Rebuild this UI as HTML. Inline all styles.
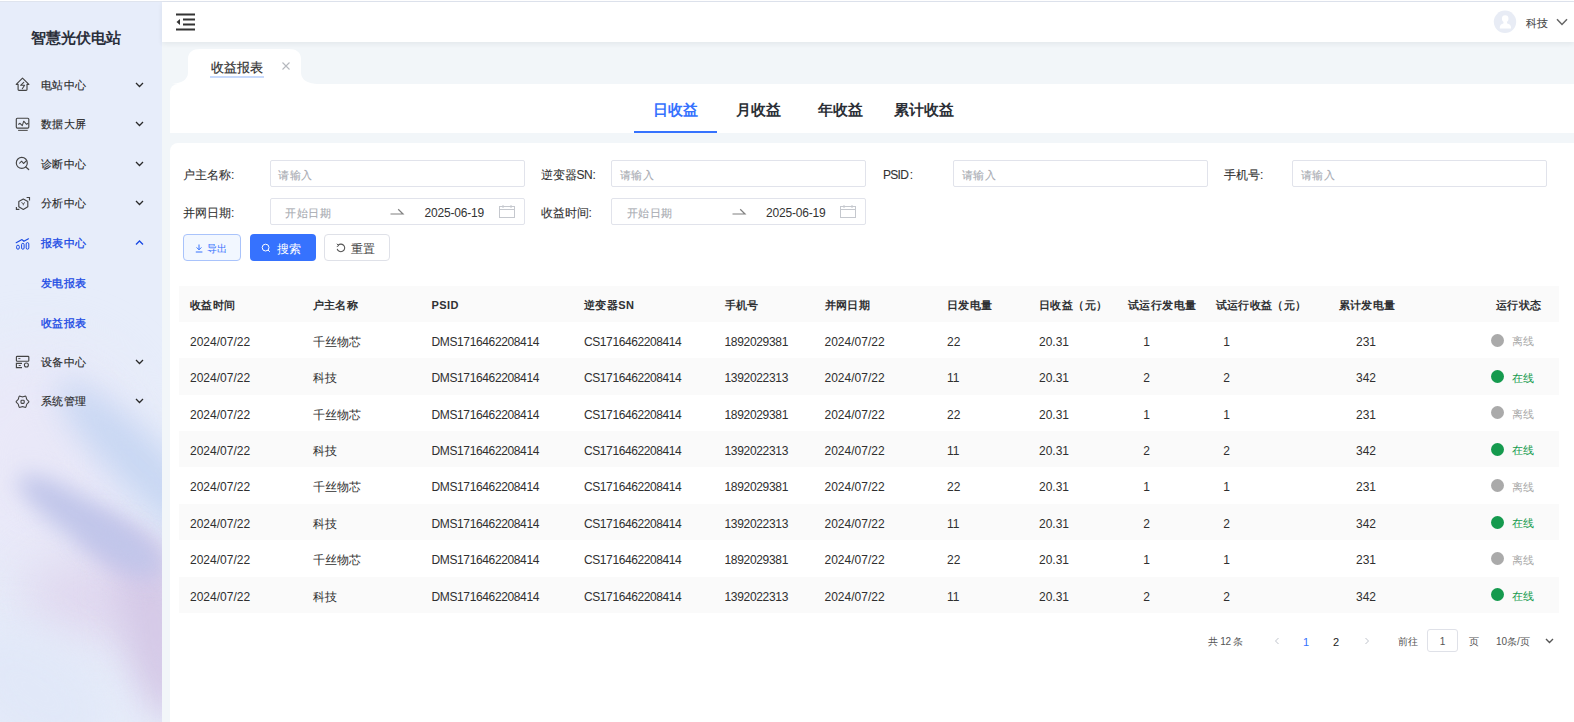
<!DOCTYPE html><html><head><meta charset="utf-8"><style>
*{box-sizing:border-box;margin:0;padding:0}
html,body{width:1574px;height:722px;overflow:hidden}
body{font-family:"Liberation Sans",sans-serif;color:#333;background:#f2f6f9;position:relative}
.a{position:absolute;white-space:nowrap}
#side{left:0;top:2px;width:162px;height:720px;background:#e7edfa;overflow:hidden}
.blob{position:absolute;border-radius:50%}
.mt{font-size:11px;letter-spacing:0.25px;line-height:14px;color:#333;-webkit-text-stroke-width:0.15px}
.act{color:#1848e4}
#header{left:162px;top:2px;width:1412px;height:40px;background:#fff;box-shadow:0 2px 5px rgba(30,40,60,0.07)}
#topline{left:0;top:1px;width:1574px;height:1px;background:#dfe4ee}
#top0{left:0;top:0;width:1574px;height:1px;background:#fff}
.card{background:#fff}
.lbl{font-size:12px;line-height:14px;color:#333;-webkit-text-stroke-width:0.1px}
.inp{border:1px solid #e1e3eb;border-radius:2px;background:#fff;height:27px}
.ph{font-size:11px;line-height:14px;color:#a8abb2;letter-spacing:0.5px;-webkit-text-stroke-width:0.1px}
.th{font-size:11px;letter-spacing:0.4px;line-height:14px;font-weight:bold;color:#303133}
.td{font-size:12px;line-height:14px;color:#2f2f2f}
.stripe{background:#fafafa}
</style></head><body>
<div id="side" class="a">
<div class="blob" style="left:-60.0px;top:350.0px;width:200px;height:220px;background:#e9e8f8;transform:rotate(0deg);filter:blur(30px)"></div>
<div class="blob" style="left:20.0px;top:550.0px;width:150px;height:90px;background:#e0d8ef;transform:rotate(0deg);filter:blur(25px)"></div>
<div class="blob" style="left:120.0px;top:530.0px;width:70px;height:190px;background:#d5c9e7;transform:rotate(-10deg);filter:blur(18px)"></div>
<div class="blob" style="left:112.5px;top:347.0px;width:55px;height:230px;background:#c8d7f3;transform:rotate(-45deg);filter:blur(16px)"></div>
<div class="blob" style="left:75.0px;top:525.0px;width:90px;height:40px;background:#cbc5ea;transform:rotate(35deg);filter:blur(12px)"></div>
<div class="blob" style="left:5.0px;top:501.0px;width:170px;height:42px;background:#c1c6ea;transform:rotate(33deg);filter:blur(11px)"></div>
<div class="blob" style="left:-50.0px;top:635.0px;width:170px;height:110px;background:#e1e8f8;transform:rotate(35deg);filter:blur(22px)"></div>
</div>
<div id="topline" class="a"></div><div id="top0" class="a"></div>
<div class="a" style="left:0;top:29px;width:151px;text-align:center;font-size:15px;line-height:18px;font-weight:bold;color:#2b2f3a">智慧光伏电站</div>
<div class="a mt" style="left:41px;top:78px;color:#2a2a2a;">电站中心</div>
<svg class="a" style="left:10px;top:72px" width="30" height="30" viewBox="0 0 30 30"><path d="M6.2 12.3 L12.5 6.2 L18.9 12.3 H17 V17.4 Q17 18.3 16.1 18.3 H9 Q8.1 18.3 8.1 17.4 V12.3 Z" fill="none" stroke="#444" stroke-width="1.15" stroke-linejoin="round"/><path d="M13.75 10.4 L10.6 13.3 H14.6 L12.3 16.7" fill="none" stroke="#444" stroke-width="1.1" stroke-linejoin="round" stroke-linecap="round"/></svg>
<svg class="a" style="left:135px;top:82px" width="9" height="6" viewBox="0 0 9 6"><path d="M1 1 L4.5 4.5 L8 1" fill="none" stroke="#2a2a2a" stroke-width="1.3"/></svg>
<div class="a mt" style="left:41px;top:117px;color:#2a2a2a;">数据大屏</div>
<svg class="a" style="left:10px;top:110px" width="30" height="30" viewBox="0 0 30 30"><rect x="6.3" y="8.2" width="12.5" height="9.9" rx="1" fill="none" stroke="#444" stroke-width="1.15"/><path d="M8.3 14.5 L10 13.3 L12.3 15.6 L13.7 11.2 L16.6 14.3 L18.3 13.3" fill="none" stroke="#444" stroke-width="1.05" stroke-linejoin="round"/><path d="M8.1 20.4 H17.7" stroke="#555" stroke-width="1.1"/></svg>
<svg class="a" style="left:135px;top:121px" width="9" height="6" viewBox="0 0 9 6"><path d="M1 1 L4.5 4.5 L8 1" fill="none" stroke="#2a2a2a" stroke-width="1.3"/></svg>
<div class="a mt" style="left:41px;top:156.5px;color:#2a2a2a;">诊断中心</div>
<svg class="a" style="left:10px;top:150px" width="30" height="30" viewBox="0 0 30 30"><circle cx="11.8" cy="12.9" r="5.5" fill="none" stroke="#444" stroke-width="1.15"/><path d="M15.8 17 L18.7 19.5" stroke="#444" stroke-width="1.2" stroke-linecap="round"/><path d="M9.3 13.5 L11.6 11.2 L13.5 13.5 L16.6 10.6" fill="none" stroke="#444" stroke-width="1.05" stroke-linejoin="round"/></svg>
<svg class="a" style="left:135px;top:160.5px" width="9" height="6" viewBox="0 0 9 6"><path d="M1 1 L4.5 4.5 L8 1" fill="none" stroke="#2a2a2a" stroke-width="1.3"/></svg>
<div class="a mt" style="left:41px;top:196px;color:#2a2a2a;">分析中心</div>
<svg class="a" style="left:10px;top:189px" width="30" height="30" viewBox="0 0 30 30"><path d="M13.3 10 L17.8 12.6 V17.8 L13.3 20.4 L8.8 17.8 V12.6 Z" fill="none" stroke="#444" stroke-width="1.15" stroke-linejoin="round"/><path d="M16.6 8.5 H19.5 V11.6 M6.4 18.1 V20.4 H9.4" fill="none" stroke="#444" stroke-width="1.15"/><path d="M11.4 13.5 L13.3 14.7 L15 13.5 M13.3 14.7 V16.3" fill="none" stroke="#555" stroke-width="1"/></svg>
<svg class="a" style="left:135px;top:200px" width="9" height="6" viewBox="0 0 9 6"><path d="M1 1 L4.5 4.5 L8 1" fill="none" stroke="#2a2a2a" stroke-width="1.3"/></svg>
<div class="a mt" style="left:41px;top:236px;color:#1848e4;-webkit-text-stroke-width:0.3px">报表中心</div>
<svg class="a" style="left:10px;top:229px" width="30" height="30" viewBox="0 0 30 30"><path d="M6.2 13.7 L12 10.6 L13.9 12.3 L18.5 9.8" fill="none" stroke="#1848e4" stroke-width="1.15" stroke-linecap="round" stroke-linejoin="round"/><rect x="6.6" y="16.2" width="2.7" height="4" rx="1.3" fill="none" stroke="#1848e4" stroke-width="1"/><rect x="11.6" y="14.4" width="2.5" height="5.8" rx="1.2" fill="none" stroke="#1848e4" stroke-width="1"/><rect x="16.2" y="13.6" width="2.6" height="6.6" rx="1.3" fill="none" stroke="#1848e4" stroke-width="1"/></svg>
<svg class="a" style="left:135px;top:240px" width="9" height="6" viewBox="0 0 9 6"><path d="M1 4.5 L4.5 1 L8 4.5" fill="none" stroke="#1848e4" stroke-width="1.3"/></svg>
<div class="a mt" style="left:41px;top:275.5px;color:#1848e4;-webkit-text-stroke-width:0.3px">发电报表</div>
<div class="a mt" style="left:41px;top:315.5px;color:#1848e4;-webkit-text-stroke-width:0.3px">收益报表</div>
<div class="a mt" style="left:41px;top:355px;color:#2a2a2a;">设备中心</div>
<svg class="a" style="left:10px;top:348px" width="30" height="30" viewBox="0 0 30 30"><rect x="6.4" y="8.3" width="12.4" height="4.9" rx="0.8" fill="none" stroke="#444" stroke-width="1.15"/><path d="M8.3 10.6 H10.4 M8.7 17.5 H10.8" stroke="#555" stroke-width="1"/><path d="M12 15.4 H6.4 V19.6 H12" fill="none" stroke="#444" stroke-width="1.15"/><circle cx="16.4" cy="17" r="2" fill="none" stroke="#444" stroke-width="1.1"/></svg>
<svg class="a" style="left:135px;top:359px" width="9" height="6" viewBox="0 0 9 6"><path d="M1 1 L4.5 4.5 L8 1" fill="none" stroke="#2a2a2a" stroke-width="1.3"/></svg>
<div class="a mt" style="left:41px;top:394px;color:#2a2a2a;">系统管理</div>
<svg class="a" style="left:10px;top:387px" width="30" height="30" viewBox="0 0 30 30"><path d="M18.90 14.75 C18.90 14.02 17.22 13.13 16.74 12.30 C16.26 11.47 16.34 9.57 15.70 9.21 C15.06 8.84 13.46 9.85 12.50 9.85 C11.54 9.85 9.94 8.84 9.30 9.21 C8.66 9.57 8.74 11.47 8.26 12.30 C7.78 13.13 6.10 14.02 6.10 14.75 C6.10 15.48 7.78 16.37 8.26 17.20 C8.74 18.03 8.66 19.93 9.30 20.29 C9.94 20.66 11.54 19.65 12.50 19.65 C13.46 19.65 15.06 20.66 15.70 20.29 C16.34 19.93 16.26 18.03 16.74 17.20 C17.22 16.37 18.90 15.48 18.90 14.75 Z" fill="none" stroke="#444" stroke-width="1.1" stroke-linejoin="round"/><rect x="11" y="13.2" width="3.2" height="3.2" rx="0.8" fill="none" stroke="#444" stroke-width="1.1"/></svg>
<svg class="a" style="left:135px;top:398px" width="9" height="6" viewBox="0 0 9 6"><path d="M1 1 L4.5 4.5 L8 1" fill="none" stroke="#2a2a2a" stroke-width="1.3"/></svg>
<div id="header" class="a"></div>
<svg class="a" style="left:176px;top:13px" width="20" height="18" viewBox="0 0 20 18"><path d="M0 1.5 H19 M7 6.5 H19 M7 11.5 H19 M0 16.5 H19" stroke="#333" stroke-width="1.8"/><path d="M0.5 9 L4 6 V12 Z" fill="#333"/></svg>
<svg class="a" style="left:1488px;top:6px" width="34" height="32" viewBox="0 0 34 32"><circle cx="17" cy="15.8" r="11.2" fill="#e8ecf5"/><ellipse cx="17.2" cy="12.7" rx="3.3" ry="3.4" fill="#fff"/><path d="M15.6 15.5 H18.8 L19.2 17.6 C21.5 18 23 19.5 23 21.2 V22.4 H11.8 V21.2 C11.8 19.5 13.3 18 15.4 17.6 Z" fill="#fff"/></svg>
<div class="a" style="left:1525.5px;top:16px;font-size:11px;line-height:14px;color:#4a4a4a;-webkit-text-stroke-width:0.1px">科技</div>
<svg class="a" style="left:1556px;top:18px" width="12" height="8" viewBox="0 0 12 8"><path d="M1 1.2 L6 6.5 L11 1.2" fill="none" stroke="#666" stroke-width="1.5"/></svg>
<svg class="a" style="left:168px;top:48px" width="152" height="36" viewBox="0 0 152 36"><path d="M0 36 C 10 36 20 34 20 24 V 11 C 20 4 25 1 32 1 H 121 C 128 1 133 4 133 11 V 24 C 133 34 143 36 152 36 Z" fill="#fff"/></svg>
<div class="a" style="left:211px;top:60px;font-size:13px;line-height:15px;color:#333;-webkit-text-stroke-width:0.2px">收益报表</div>
<div class="a" style="left:209.5px;top:76px;width:54px;height:2px;background:#c8dafc"></div>
<svg class="a" style="left:281px;top:61px" width="10" height="10" viewBox="0 0 10 10"><path d="M1.5 1.5 L8.5 8.5 M8.5 1.5 L1.5 8.5" stroke="#b5b8be" stroke-width="1.1"/></svg>
<div class="a card" style="left:170px;top:83.5px;width:1412px;height:49.5px;border-radius:8px 8px 0 0"></div>
<div class="a" style="left:653px;top:101.5px;font-size:14.6px;line-height:17px;font-weight:bold;color:#3672fe">日收益</div>
<div class="a" style="left:735.5px;top:101.5px;font-size:14.6px;line-height:17px;font-weight:bold;color:#2b2f36">月收益</div>
<div class="a" style="left:818px;top:101.5px;font-size:14.6px;line-height:17px;font-weight:bold;color:#2b2f36">年收益</div>
<div class="a" style="left:893.5px;top:101.5px;font-size:14.6px;line-height:17px;font-weight:bold;color:#2b2f36">累计收益</div>
<div class="a" style="left:634px;top:131px;width:83px;height:2px;background:#3672fe"></div>
<div class="a card" style="left:170px;top:143px;width:1412px;height:579px;border-radius:8px 8px 0 0"></div>
<div class="a lbl" style="left:183px;top:167.5px">户主名称:</div>
<div class="a lbl" style="left:540.5px;top:167.5px">逆变器<span style="letter-spacing:-0.4px">SN</span>:</div>
<div class="a lbl" style="left:883px;top:167.5px"><span style="letter-spacing:-0.7px">PSID</span><span style="margin-left:1.5px">:</span></div>
<div class="a lbl" style="left:1224px;top:167.5px">手机号:</div>
<div class="a lbl" style="left:183px;top:205.5px">并网日期:</div>
<div class="a lbl" style="left:540.5px;top:205.5px">收益时间:</div>
<div class="a inp" style="left:269.5px;top:160px;width:255px"></div>
<div class="a ph" style="left:278.0px;top:168px">请输入</div>
<div class="a inp" style="left:611px;top:160px;width:255px"></div>
<div class="a ph" style="left:619.5px;top:168px">请输入</div>
<div class="a inp" style="left:953px;top:160px;width:255px"></div>
<div class="a ph" style="left:961.5px;top:168px">请输入</div>
<div class="a inp" style="left:1292px;top:160px;width:255px"></div>
<div class="a ph" style="left:1300.5px;top:168px">请输入</div>
<div class="a inp" style="left:269.5px;top:198px;width:255px"></div>
<div class="a ph" style="left:285.0px;top:206px">开始日期</div>
<svg class="a" style="left:390.0px;top:208px" width="15" height="8" viewBox="0 0 15 8"><path d="M0.5 6 H13 L8.2 1.3" fill="none" stroke="#808080" stroke-width="1.2"/></svg>
<div class="a" style="left:424.5px;top:206px;font-size:12px;line-height:14px;color:#333;letter-spacing:-0.2px">2025-06-19</div>
<svg class="a" style="left:498.5px;top:205px" width="17" height="13" viewBox="0 0 17 13"><rect x="0.5" y="1.5" width="15" height="11" fill="none" stroke="#c5c8ce" stroke-width="1"/><path d="M0.5 4.5 H15.5 M4 0 V3 M12 0 V3" stroke="#c5c8ce" stroke-width="1"/></svg>
<div class="a inp" style="left:611px;top:198px;width:255px"></div>
<div class="a ph" style="left:626.5px;top:206px">开始日期</div>
<svg class="a" style="left:731.5px;top:208px" width="15" height="8" viewBox="0 0 15 8"><path d="M0.5 6 H13 L8.2 1.3" fill="none" stroke="#808080" stroke-width="1.2"/></svg>
<div class="a" style="left:766px;top:206px;font-size:12px;line-height:14px;color:#333;letter-spacing:-0.2px">2025-06-19</div>
<svg class="a" style="left:840px;top:205px" width="17" height="13" viewBox="0 0 17 13"><rect x="0.5" y="1.5" width="15" height="11" fill="none" stroke="#c5c8ce" stroke-width="1"/><path d="M0.5 4.5 H15.5 M4 0 V3 M12 0 V3" stroke="#c5c8ce" stroke-width="1"/></svg>
<div class="a" style="left:183px;top:234px;width:58px;height:27px;border:1px solid #a9c3fb;border-radius:4px;background:#f2f7ff"></div>
<svg class="a" style="left:195px;top:244px" width="9" height="9" viewBox="0 0 9 9"><path d="M4 0.5 V5.8 M1.6 3.4 L4 5.8 L6.4 3.4 M0.8 8 H7.4" fill="none" stroke="#3672fe" stroke-width="1"/></svg>
<div class="a" style="left:206.5px;top:242.5px;font-size:10px;line-height:12px;color:#3672fe;letter-spacing:0.3px">导出</div>
<div class="a" style="left:250px;top:234px;width:66px;height:27px;border-radius:4px;background:#3672fe"></div>
<svg class="a" style="left:261px;top:243px" width="10" height="10" viewBox="0 0 10 10"><circle cx="4.6" cy="4.6" r="3.4" fill="none" stroke="#fff" stroke-width="1"/><path d="M7 7 L8.8 8.8" stroke="#fff" stroke-width="1"/></svg>
<div class="a" style="left:277px;top:242px;font-size:12px;line-height:14px;color:#fff">搜索</div>
<div class="a" style="left:324px;top:234px;width:66px;height:27px;border:1px solid #dfe1e8;border-radius:4px;background:#fff"></div>
<svg class="a" style="left:335.5px;top:243px" width="10" height="10" viewBox="0 0 10 10"><path d="M2.2 2.2 A3.8 3.8 0 1 1 1.2 5.8" fill="none" stroke="#555" stroke-width="1.1"/><path d="M0.8 0.8 L2.8 2.6 L0.8 3.6" fill="none" stroke="#555" stroke-width="1"/></svg>
<div class="a" style="left:351px;top:242px;font-size:12px;line-height:14px;color:#444">重置</div>
<div class="a" style="left:179px;top:286.2px;width:1380px;height:35.8px;background:#fafafa"></div>
<div class="a th" style="left:190px;top:298.09999999999997px">收益时间</div>
<div class="a th" style="left:312.5px;top:298.09999999999997px">户主名称</div>
<div class="a th" style="left:431.5px;top:298.09999999999997px">PSID</div>
<div class="a th" style="left:584px;top:298.09999999999997px">逆变器SN</div>
<div class="a th" style="left:724.5px;top:298.09999999999997px">手机号</div>
<div class="a th" style="left:824.5px;top:298.09999999999997px">并网日期</div>
<div class="a th" style="left:947px;top:298.09999999999997px">日发电量</div>
<div class="a th" style="left:1039px;top:298.09999999999997px">日收益（元）</div>
<div class="a th" style="left:1128px;top:298.09999999999997px">试运行发电量</div>
<div class="a th" style="left:1215.5px;top:298.09999999999997px">试运行收益（元）</div>
<div class="a th" style="left:1338.5px;top:298.09999999999997px">累计发电量</div>
<div class="a th" style="left:1496px;top:298.09999999999997px">运行状态</div>
<div class="a td" style="left:190px;top:334.985px;letter-spacing:0px">2024/07/22</div>
<div class="a td" style="left:312.5px;top:334.985px;letter-spacing:0px">千丝物芯</div>
<div class="a td" style="left:431.5px;top:334.985px;letter-spacing:-0.37px">DMS1716462208414</div>
<div class="a td" style="left:584px;top:334.985px;letter-spacing:-0.41px">CS1716462208414</div>
<div class="a td" style="left:724.5px;top:334.985px;letter-spacing:-0.32px">1892029381</div>
<div class="a td" style="left:824.5px;top:334.985px;letter-spacing:0px">2024/07/22</div>
<div class="a td" style="left:947px;top:334.985px;letter-spacing:0px">22</div>
<div class="a td" style="left:1039px;top:334.985px;letter-spacing:0px">20.31</div>
<div class="a td" style="left:1116.5px;width:60px;text-align:center;top:334.985px">1</div>
<div class="a td" style="left:1196.5px;width:60px;text-align:center;top:334.985px">1</div>
<div class="a td" style="left:1336px;width:60px;text-align:center;top:334.985px">231</div>
<div class="a" style="left:1491px;top:333.685px;width:13px;height:13px;border-radius:50%;background:#aaaaaa"></div>
<div class="a" style="left:1511.5px;top:335.385px;font-size:11px;line-height:13px;color:#aaaaaa">离线</div>
<div class="a stripe" style="left:179px;top:358.37px;width:1380px;height:36.37px"></div>
<div class="a td" style="left:190px;top:371.355px;letter-spacing:0px">2024/07/22</div>
<div class="a td" style="left:312.5px;top:371.355px;letter-spacing:0px">科技</div>
<div class="a td" style="left:431.5px;top:371.355px;letter-spacing:-0.37px">DMS1716462208414</div>
<div class="a td" style="left:584px;top:371.355px;letter-spacing:-0.41px">CS1716462208414</div>
<div class="a td" style="left:724.5px;top:371.355px;letter-spacing:-0.32px">1392022313</div>
<div class="a td" style="left:824.5px;top:371.355px;letter-spacing:0px">2024/07/22</div>
<div class="a td" style="left:947px;top:371.355px;letter-spacing:0px">11</div>
<div class="a td" style="left:1039px;top:371.355px;letter-spacing:0px">20.31</div>
<div class="a td" style="left:1116.5px;width:60px;text-align:center;top:371.355px">2</div>
<div class="a td" style="left:1196.5px;width:60px;text-align:center;top:371.355px">2</div>
<div class="a td" style="left:1336px;width:60px;text-align:center;top:371.355px">342</div>
<div class="a" style="left:1491px;top:370.055px;width:13px;height:13px;border-radius:50%;background:#159a4e"></div>
<div class="a" style="left:1511.5px;top:371.755px;font-size:11px;line-height:13px;color:#159a4e">在线</div>
<div class="a td" style="left:190px;top:407.725px;letter-spacing:0px">2024/07/22</div>
<div class="a td" style="left:312.5px;top:407.725px;letter-spacing:0px">千丝物芯</div>
<div class="a td" style="left:431.5px;top:407.725px;letter-spacing:-0.37px">DMS1716462208414</div>
<div class="a td" style="left:584px;top:407.725px;letter-spacing:-0.41px">CS1716462208414</div>
<div class="a td" style="left:724.5px;top:407.725px;letter-spacing:-0.32px">1892029381</div>
<div class="a td" style="left:824.5px;top:407.725px;letter-spacing:0px">2024/07/22</div>
<div class="a td" style="left:947px;top:407.725px;letter-spacing:0px">22</div>
<div class="a td" style="left:1039px;top:407.725px;letter-spacing:0px">20.31</div>
<div class="a td" style="left:1116.5px;width:60px;text-align:center;top:407.725px">1</div>
<div class="a td" style="left:1196.5px;width:60px;text-align:center;top:407.725px">1</div>
<div class="a td" style="left:1336px;width:60px;text-align:center;top:407.725px">231</div>
<div class="a" style="left:1491px;top:406.425px;width:13px;height:13px;border-radius:50%;background:#aaaaaa"></div>
<div class="a" style="left:1511.5px;top:408.125px;font-size:11px;line-height:13px;color:#aaaaaa">离线</div>
<div class="a stripe" style="left:179px;top:431.11px;width:1380px;height:36.37px"></div>
<div class="a td" style="left:190px;top:444.095px;letter-spacing:0px">2024/07/22</div>
<div class="a td" style="left:312.5px;top:444.095px;letter-spacing:0px">科技</div>
<div class="a td" style="left:431.5px;top:444.095px;letter-spacing:-0.37px">DMS1716462208414</div>
<div class="a td" style="left:584px;top:444.095px;letter-spacing:-0.41px">CS1716462208414</div>
<div class="a td" style="left:724.5px;top:444.095px;letter-spacing:-0.32px">1392022313</div>
<div class="a td" style="left:824.5px;top:444.095px;letter-spacing:0px">2024/07/22</div>
<div class="a td" style="left:947px;top:444.095px;letter-spacing:0px">11</div>
<div class="a td" style="left:1039px;top:444.095px;letter-spacing:0px">20.31</div>
<div class="a td" style="left:1116.5px;width:60px;text-align:center;top:444.095px">2</div>
<div class="a td" style="left:1196.5px;width:60px;text-align:center;top:444.095px">2</div>
<div class="a td" style="left:1336px;width:60px;text-align:center;top:444.095px">342</div>
<div class="a" style="left:1491px;top:442.795px;width:13px;height:13px;border-radius:50%;background:#159a4e"></div>
<div class="a" style="left:1511.5px;top:444.495px;font-size:11px;line-height:13px;color:#159a4e">在线</div>
<div class="a td" style="left:190px;top:480.46500000000003px;letter-spacing:0px">2024/07/22</div>
<div class="a td" style="left:312.5px;top:480.46500000000003px;letter-spacing:0px">千丝物芯</div>
<div class="a td" style="left:431.5px;top:480.46500000000003px;letter-spacing:-0.37px">DMS1716462208414</div>
<div class="a td" style="left:584px;top:480.46500000000003px;letter-spacing:-0.41px">CS1716462208414</div>
<div class="a td" style="left:724.5px;top:480.46500000000003px;letter-spacing:-0.32px">1892029381</div>
<div class="a td" style="left:824.5px;top:480.46500000000003px;letter-spacing:0px">2024/07/22</div>
<div class="a td" style="left:947px;top:480.46500000000003px;letter-spacing:0px">22</div>
<div class="a td" style="left:1039px;top:480.46500000000003px;letter-spacing:0px">20.31</div>
<div class="a td" style="left:1116.5px;width:60px;text-align:center;top:480.46500000000003px">1</div>
<div class="a td" style="left:1196.5px;width:60px;text-align:center;top:480.46500000000003px">1</div>
<div class="a td" style="left:1336px;width:60px;text-align:center;top:480.46500000000003px">231</div>
<div class="a" style="left:1491px;top:479.165px;width:13px;height:13px;border-radius:50%;background:#aaaaaa"></div>
<div class="a" style="left:1511.5px;top:480.865px;font-size:11px;line-height:13px;color:#aaaaaa">离线</div>
<div class="a stripe" style="left:179px;top:503.85px;width:1380px;height:36.37px"></div>
<div class="a td" style="left:190px;top:516.8349999999999px;letter-spacing:0px">2024/07/22</div>
<div class="a td" style="left:312.5px;top:516.8349999999999px;letter-spacing:0px">科技</div>
<div class="a td" style="left:431.5px;top:516.8349999999999px;letter-spacing:-0.37px">DMS1716462208414</div>
<div class="a td" style="left:584px;top:516.8349999999999px;letter-spacing:-0.41px">CS1716462208414</div>
<div class="a td" style="left:724.5px;top:516.8349999999999px;letter-spacing:-0.32px">1392022313</div>
<div class="a td" style="left:824.5px;top:516.8349999999999px;letter-spacing:0px">2024/07/22</div>
<div class="a td" style="left:947px;top:516.8349999999999px;letter-spacing:0px">11</div>
<div class="a td" style="left:1039px;top:516.8349999999999px;letter-spacing:0px">20.31</div>
<div class="a td" style="left:1116.5px;width:60px;text-align:center;top:516.8349999999999px">2</div>
<div class="a td" style="left:1196.5px;width:60px;text-align:center;top:516.8349999999999px">2</div>
<div class="a td" style="left:1336px;width:60px;text-align:center;top:516.8349999999999px">342</div>
<div class="a" style="left:1491px;top:515.535px;width:13px;height:13px;border-radius:50%;background:#159a4e"></div>
<div class="a" style="left:1511.5px;top:517.235px;font-size:11px;line-height:13px;color:#159a4e">在线</div>
<div class="a td" style="left:190px;top:553.2049999999999px;letter-spacing:0px">2024/07/22</div>
<div class="a td" style="left:312.5px;top:553.2049999999999px;letter-spacing:0px">千丝物芯</div>
<div class="a td" style="left:431.5px;top:553.2049999999999px;letter-spacing:-0.37px">DMS1716462208414</div>
<div class="a td" style="left:584px;top:553.2049999999999px;letter-spacing:-0.41px">CS1716462208414</div>
<div class="a td" style="left:724.5px;top:553.2049999999999px;letter-spacing:-0.32px">1892029381</div>
<div class="a td" style="left:824.5px;top:553.2049999999999px;letter-spacing:0px">2024/07/22</div>
<div class="a td" style="left:947px;top:553.2049999999999px;letter-spacing:0px">22</div>
<div class="a td" style="left:1039px;top:553.2049999999999px;letter-spacing:0px">20.31</div>
<div class="a td" style="left:1116.5px;width:60px;text-align:center;top:553.2049999999999px">1</div>
<div class="a td" style="left:1196.5px;width:60px;text-align:center;top:553.2049999999999px">1</div>
<div class="a td" style="left:1336px;width:60px;text-align:center;top:553.2049999999999px">231</div>
<div class="a" style="left:1491px;top:551.905px;width:13px;height:13px;border-radius:50%;background:#aaaaaa"></div>
<div class="a" style="left:1511.5px;top:553.605px;font-size:11px;line-height:13px;color:#aaaaaa">离线</div>
<div class="a stripe" style="left:179px;top:576.5899999999999px;width:1380px;height:36.37px"></div>
<div class="a td" style="left:190px;top:589.5749999999998px;letter-spacing:0px">2024/07/22</div>
<div class="a td" style="left:312.5px;top:589.5749999999998px;letter-spacing:0px">科技</div>
<div class="a td" style="left:431.5px;top:589.5749999999998px;letter-spacing:-0.37px">DMS1716462208414</div>
<div class="a td" style="left:584px;top:589.5749999999998px;letter-spacing:-0.41px">CS1716462208414</div>
<div class="a td" style="left:724.5px;top:589.5749999999998px;letter-spacing:-0.32px">1392022313</div>
<div class="a td" style="left:824.5px;top:589.5749999999998px;letter-spacing:0px">2024/07/22</div>
<div class="a td" style="left:947px;top:589.5749999999998px;letter-spacing:0px">11</div>
<div class="a td" style="left:1039px;top:589.5749999999998px;letter-spacing:0px">20.31</div>
<div class="a td" style="left:1116.5px;width:60px;text-align:center;top:589.5749999999998px">2</div>
<div class="a td" style="left:1196.5px;width:60px;text-align:center;top:589.5749999999998px">2</div>
<div class="a td" style="left:1336px;width:60px;text-align:center;top:589.5749999999998px">342</div>
<div class="a" style="left:1491px;top:588.2749999999999px;width:13px;height:13px;border-radius:50%;background:#159a4e"></div>
<div class="a" style="left:1511.5px;top:589.9749999999999px;font-size:11px;line-height:13px;color:#159a4e">在线</div>
<div class="a" style="left:1208px;top:635.5px;font-size:10px;line-height:12px;color:#555;letter-spacing:-0.3px">共 12 条</div>
<svg class="a" style="left:1274px;top:636.5px" width="6" height="8" viewBox="0 0 6 8"><path d="M4.5 1 L1.5 4 L4.5 7" fill="none" stroke="#c0c4cc" stroke-width="1"/></svg>
<div class="a" style="left:1303px;top:636.0px;font-size:11px;line-height:13px;color:#3672fe">1</div>
<div class="a" style="left:1333px;top:636.0px;font-size:11px;line-height:13px;color:#222">2</div>
<svg class="a" style="left:1364px;top:636.5px" width="6" height="8" viewBox="0 0 6 8"><path d="M1.5 1 L4.5 4 L1.5 7" fill="none" stroke="#c0c4cc" stroke-width="1"/></svg>
<div class="a" style="left:1397.5px;top:635.5px;font-size:10px;line-height:12px;color:#555">前往</div>
<div class="a" style="left:1427px;top:629px;width:31px;height:23px;border:1px solid #dfe1e8;border-radius:3px"></div>
<div class="a" style="left:1427px;width:31px;text-align:center;top:635.5px;font-size:10px;line-height:12px;color:#555">1</div>
<div class="a" style="left:1469px;top:635.5px;font-size:10px;line-height:12px;color:#555">页</div>
<div class="a" style="left:1496px;top:635.5px;font-size:10px;line-height:12px;color:#555">10条/页</div>
<svg class="a" style="left:1544.5px;top:638.0px" width="9" height="6" viewBox="0 0 9 6"><path d="M1 1 L4.5 4.5 L8 1" fill="none" stroke="#555" stroke-width="1.4"/></svg>
</body></html>
